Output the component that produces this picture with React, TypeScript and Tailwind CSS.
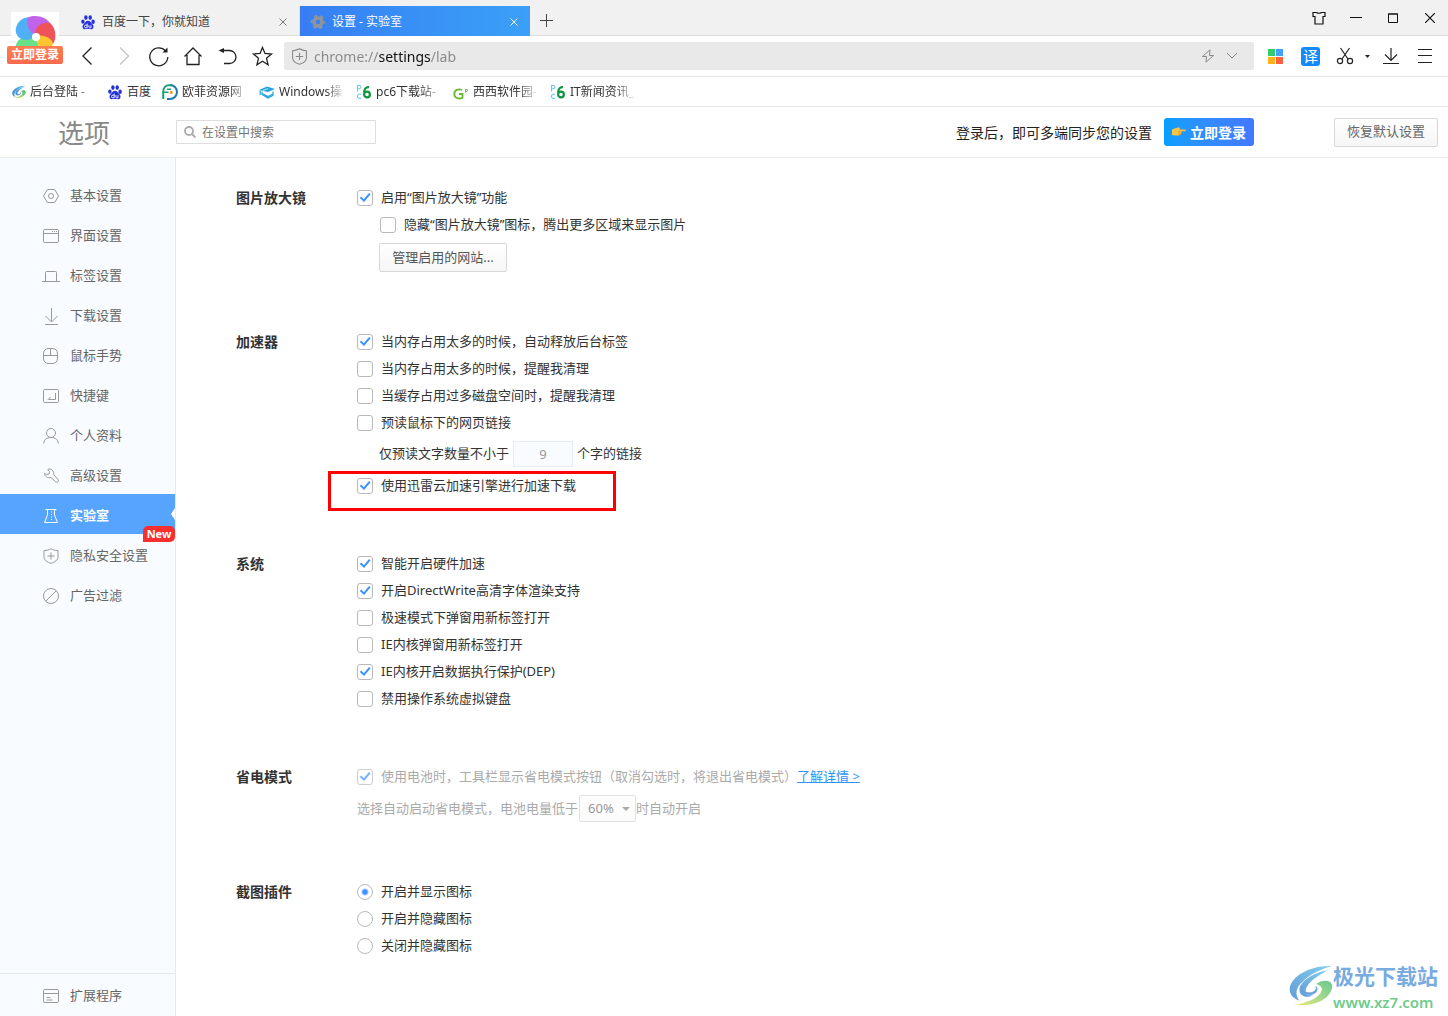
import React, { useState } from 'react';

type IconProps = { className?: string };

const line = {
  fill: 'none',
  stroke: 'currentColor',
  strokeWidth: 1,
} as const;

const BaiduIcon = ({ className = 'h-4 w-4' }: IconProps) => (
  <svg viewBox="0 0 16 16" className={className} fill="#2531d8">
    <ellipse cx="2.9" cy="7.6" rx="1.7" ry="2.2" />
    <ellipse cx="5.9" cy="3.6" rx="1.7" ry="2.4" />
    <ellipse cx="10.2" cy="3.6" rx="1.7" ry="2.4" />
    <ellipse cx="13.1" cy="7.8" rx="1.7" ry="2.2" />
    <path d="M8 6.8c2 0 2.8 1.8 4 3 1.400 1.300 1.700 2.300 1.400 3.600-.4 1.600-2 2-3.400 1.700-1.400-.3-2.600-.3-4 0-1.500.3-3-.2-3.400-1.700-.3-1.300.1-2.400 1.400-3.600 1.200-1.200 2-3 4-3z" />
    <path d="M7.200 9.600v4.200H5.800a1.300 1.300 0 0 1 0-2.600h1.400M8.900 11.200v1.800q0 .8.8.8h1.300v-2.600" fill="none" stroke="#fff" strokeWidth=".9" />
  </svg>
);

const GearIcon = () => (
  <svg viewBox="0 0 16 16" className="h-4 w-4" fill="none" stroke="#8f959c">
    <circle cx="8" cy="8" r="4" strokeWidth="3.400" />
    <circle cx="8" cy="8" r="6.300" strokeWidth="2" strokeDasharray="3.300 3.300" strokeDashoffset="1.600" />
  </svg>
);

const SwirlLogo = ({ className = 'h-4 w-4' }: IconProps) => (
  <svg viewBox="0 0 42 40" className={className}>
    <defs>
      <linearGradient id="swirlTop" x1="0" y1="1" x2="1" y2="0">
        <stop offset="0" stopColor="#3f83cf" />
        <stop offset="1" stopColor="#62c3ea" />
      </linearGradient>
      <linearGradient id="swirlBottom" x1="0" y1="1" x2="1" y2="0">
        <stop offset="0" stopColor="#e6e84e" />
        <stop offset=".5" stopColor="#8fd070" />
        <stop offset="1" stopColor="#45bb72" />
      </linearGradient>
    </defs>
    <path d="M41 1C20 0 2 11 .8 22c-.7 6 3 10 9.200 12-5-6-3-13 3-18C20 9 30 4 41 1z" fill="url(#swirlTop)" />
    <path d="M37 5C24 7 11 15 10 23c-.6 6 6 9 13 6-6 1-9-3-6-8 3-6 11-11 20-16z" fill="url(#swirlTop)" />
    <path d="M14 24c1 5 7 6 11 3 3-3 3-6 0-7 2 3-1 6-5 6-3 0-5-1-6-2z" fill="#4a8ed4" />
    <path d="M26 18c4-3 9-4 13-2 5 4 1 13-8 18-8 4-17 5-27 4 9-1 18-4 23-8 6-5 6-10-1-12z" fill="url(#swirlBottom)" />
  </svg>
);

const EdgeLeafIcon = () => (
  <svg viewBox="0 0 16 16" className="h-4 w-4" fill="none">
    <path d="M8 1a7 7 0 0 1 0 14H5" stroke="#1f78b4" strokeWidth="2" />
    <path d="M9 1.200H7C3.500 1.200 1.200 4 1.200 8v7" stroke="#1b9e77" strokeWidth="2" />
    <path d="M2 8.200h4.500M5 5.200h4" stroke="#1b9e77" strokeWidth="1.600" />
    <circle cx="9.200" cy="8.400" r="1.600" fill="#f39c33" />
  </svg>
);

const HatFavicon = () => (
  <svg viewBox="0 0 16 16" className="h-4 w-4">
    <path d="M0 6 8 2.500 16 5 9 8z" fill="#25a5e0" />
    <path d="M3 7.500v3L9 14l5-2.500v-4M3 9.500l6 3 5-2.500M1.200 6.500V11" fill="none" stroke="#25a5e0" strokeWidth="1.200" />
    <path d="M4 6.500 9 4.500" stroke="#fff" strokeWidth=".7" />
  </svg>
);

const Pc6Icon = () => (
  <svg viewBox="0 0 16 16" className="h-4 w-4" fill="none">
    <path d="M1.500 7.500v-6h1.800a1.600 1.600 0 0 1 0 3.200H1.500M5 10.500a2.200 2.200 0 1 0 0 3.500" stroke="#6cc8ea" strokeWidth="1.100" />
    <path d="M13 3.200c-3-.6-4.800 2-4.800 5.300" stroke="#0f9640" strokeWidth="2.200" />
    <circle cx="11" cy="10.500" r="2.900" stroke="#0f9640" strokeWidth="2.200" />
  </svg>
);

const XixiIcon = () => (
  <svg viewBox="0 0 16 16" className="h-4 w-4" fill="none" stroke="#6ab82f">
    <path d="M9 6C5.500 4.400 1.300 6 1.300 10s4.200 5.500 8.200 3.800V10H6" strokeWidth="1.800" />
    <path d="M12.500 8.500v-3h1.200a.8.8 0 0 1 0 1.800h-1.200" strokeWidth="1" />
  </svg>
);

const BrowserLogo = () => (
  <svg viewBox="0 0 48 36" className="h-9 w-12 bg-white">
    <path d="M25 24C13 24 5 26 4.500 36H28z" fill="#6be08a" />
    <path d="M25 24C10 34 3 22 5 16 7 8 14 4 20 6c-3 6-1 14 5 18z" fill="#4fb0f8" />
    <path d="M25 24c-9-5-9-13-9-18 7-4 20-2 24 7-7-2-15 1-15 11z" fill="#c163ea" />
    <path d="M25 24c-3-8 5-15 14-13 6 5 7 15 3 21-2-5-8-8-17-8z" fill="#f0525a" />
    <path d="M25 24c8-2 16 2 17 8l-2 4H28z" fill="#ffc52e" />
    <circle cx="25" cy="25" r="4" fill="#fff" />
  </svg>
);

const ShieldIcon = ({ className = 'h-4 w-4' }: IconProps) => (
  <svg viewBox="0 0 16 16" className={className} {...line}>
    <path d="M8 .7C6 2 4 2.500 1.500 2.500v6.800C1.500 12 4 14 8 15.400c4-1.400 6.500-3.400 6.500-6.100V2.500C12 2.500 10 2 8 .7zM8 4.500v7M4.500 8h7" />
  </svg>
);

const navIcons: Record<string, React.ReactNode> = {
  basic: <path d="M4.300 1.500h7.400L15.500 8l-3.800 6.500H4.300L.5 8zM8 5.500a2.500 2.500 0 1 0 0 5 2.500 2.500 0 0 0 0-5z" />,
  ui: <path d="M2 1.500h12q1.500 0 1.500 1v11q0 1-1.500 1H2q-1.500 0-1.500-1v-11q0-1 1.500-1zM.5 5.500h15M9 3.500h1M11 3.500h1M13 3.500h1" />,
  tab: <path d="M-1 13.500h18M2.500 13.500v-9q0-1 1-1h9q1 0 1 1v9" />,
  download: <path d="M8.500 0v13.500M2.500 8l6 6 6-6M2 16.500h13" />,
  mouse: <path d="M6 .5h3q5.500 0 5.500 5.500v4q0 5.500-5.500 5.500H6Q.5 15.500.5 10V6Q.5.500 6 .5zM.5 7.500h14M7.500.5v7" />,
  shortcut: <path d="M1.500 1.500h13q1 0 1 1v11q0 1-1 1h-13q-1 0-1-1v-11q0-1 1-1zM12.500 5v6.500h-7M5 11.500 7.500 9" />,
  profile: <path d="M8 .5a4.500 4.500 0 1 0 0 9 4.500 4.500 0 0 0 0-9zM.7 15.500c.3-4 3-6 7.300-6s7 2 7.300 6" />,
  advanced: <path d="M6 .8a5 5 0 0 1 4.700 6l4.300 4.500a1.700 1.700 0 0 1-2.500 2.400L8 9.500c-3.300 1-6.300-1-6.500-4.200l1.800 1.300 2.800-.6.400-2.500L4.700 1.800z" />,
  lab: <path d="M2.500 1.500h11M4.500 1.500v5.500L1.500 14.500h13L11.500 7V1.500M8 4h1M8 6.500h1M8 9h1M8 11.500h1" />,
  privacy: <path d="M8 .7C6 2 4 2.500 1 2.500v6.800C1 12 4 14 8 15.400c4-1.400 7-3.400 7-6.100V2.500C12 2.500 10 2 8 .7zM8 4.500v7M4.500 8h7" />,
  adblock: <path d="M8 .5a7.500 7.500 0 1 0 0 15 7.500 7.500 0 0 0 0-15zM2.800 13.200 13.200 2.800" />,
  extension: <path d="M2 1.500h12q1.500 0 1.500 1v11q0 1-1.500 1H2q-1.500 0-1.500-1v-11q0-1 1.500-1zM.5 5.500h15M3.500 9.500h4M3.500 12h6" />,
};

const NavIcon = ({ name }: { name: string }) => (
  <svg viewBox="0 0 16 16" className="h-4 w-4 overflow-visible" {...line}>{navIcons[name]}</svg>
);

const navItems = [
  { id: 'basic', label: '基本设置' },
  { id: 'ui', label: '界面设置' },
  { id: 'tab', label: '标签设置' },
  { id: 'download', label: '下载设置' },
  { id: 'mouse', label: '鼠标手势' },
  { id: 'shortcut', label: '快捷键' },
  { id: 'profile', label: '个人资料' },
  { id: 'advanced', label: '高级设置' },
  { id: 'lab', label: '实验室' },
  { id: 'privacy', label: '隐私安全设置' },
  { id: 'adblock', label: '广告过滤' },
];

const bookmarks = [
  { label: '后台登陆 -', icon: <SwirlLogo className="h-4 w-4 pl-[2px]" /> },
  { label: '百度', icon: <BaiduIcon />, short: true },
  { label: '欧菲资源网', icon: <EdgeLeafIcon /> },
  { label: 'Windows操', icon: <HatFavicon /> },
  { label: 'pc6下载站-', icon: <Pc6Icon /> },
  { label: '西西软件园-', icon: <XixiIcon /> },
  { label: 'IT新闻资讯_', icon: <Pc6Icon /> },
];

interface CheckProps {
  label: string;
  on?: boolean;
  disabled?: boolean;
}

function Check({ label, on = false, disabled = false }: CheckProps) {
  const [checked, setChecked] = useState(on);
  return (
    <label className={`flex h-[27px] items-center gap-2 ${disabled ? 'text-[#aaa]' : 'text-[#333]'}`}>
      <span className={`grid h-4 w-4 shrink-0 ${disabled ? 'opacity-70' : ''}`}>
        <input
          type="checkbox"
          checked={checked}
          disabled={disabled}
          onChange={(e) => setChecked(e.target.checked)}
          className="h-4 w-4 appearance-none rounded-[3px] border border-[#b9b9b9] bg-white [grid-area:1/1]"
        />
        {checked && (
          <svg viewBox="0 0 16 16" className="pointer-events-none h-4 w-4 [grid-area:1/1]" fill="none" stroke="#3b92fb" strokeWidth="2">
            <path d="M3.500 7.200 7 10.600l5.800-7" />
          </svg>
        )}
      </span>
      {label}
    </label>
  );
}

function Section({ title, children }: { title: string; children: React.ReactNode }) {
  return (
    <section className="flex">
      <h2 className="w-[121px] shrink-0 text-[14px] leading-[27px] font-bold text-[#333]">{title}</h2>
      <div className="min-w-0 flex-1">{children}</div>
    </section>
  );
}

function ToolButton({ label, children }: { label: string; children: React.ReactNode }) {
  return (
    <button type="button" aria-label={label} className="flex h-8 w-[35px] items-center justify-center">
      <svg viewBox="0 0 20 20" className="h-5 w-5 overflow-visible" fill="none" stroke="currentColor" strokeWidth="1.300">
        {children}
      </svg>
    </button>
  );
}

function TabBar() {
  return (
    <div className="flex h-9 items-end border-b border-[#dcdcdc] bg-[#f1f1f1] pl-[70px] text-[12px]">
      <div className="flex h-[29px] w-[230px] items-center border-r border-[#e2e2e2] pt-[2px] pr-2 pl-[10px] text-[#444]">
        <BaiduIcon />
        <span className="ml-[6px] flex-1">百度一下，你就知道</span>
        <button type="button" aria-label="关闭标签" className="p-1 text-[#777]">
          <svg viewBox="0 0 8 8" className="h-2 w-2" {...line}><path d="M.5.5l7 7M7.500.5l-7 7" /></svg>
        </button>
      </div>
      <div className="-mb-px flex h-[30px] w-[230px] items-center bg-linear-to-r from-[#377df3] via-[#3890f5] to-[#3ba0f8] pt-px pr-2 pl-[10px] text-white">
        <GearIcon />
        <span className="ml-[6px] flex-1">设置 - 实验室</span>
        <button type="button" aria-label="关闭标签" className="p-1 text-white">
          <svg viewBox="0 0 8 8" className="h-2 w-2" {...line}><path d="M.5.5l7 7M7.500.5l-7 7" /></svg>
        </button>
      </div>
      <button type="button" aria-label="新建标签" className="flex h-[30px] w-8 items-center justify-center text-[#444]">
        <svg viewBox="0 0 13 13" className="h-[13px] w-[13px]" {...line}><path d="M6.500 0v13M0 6.500h13" /></svg>
      </button>
      <div className="ml-auto flex h-9 w-[148px] items-center pt-[2px] text-[#111]">
        <button type="button" aria-label="皮肤" className="flex flex-1 justify-center">
          <svg viewBox="0 0 14 14" className="h-[14px] w-[14px]" {...line} strokeWidth="1.200">
            <path d="M1 1.500h3.500q2.500 1.500 5 0H13v4h-2v7.500H3V5.500H1z" />
          </svg>
        </button>
        <button type="button" aria-label="最小化" className="flex flex-1 justify-center">
          <svg viewBox="0 0 12 12" className="h-3 w-3" {...line}><path d="M0 5.500h12" /></svg>
        </button>
        <button type="button" aria-label="最大化" className="flex flex-1 justify-center">
          <svg viewBox="0 0 10 10" className="h-[10px] w-[10px]" {...line}><path d="M.5 1h9v8.500h-9zM0 1h10" /></svg>
        </button>
        <button type="button" aria-label="关闭" className="flex flex-1 justify-center">
          <svg viewBox="0 0 10 10" className="h-[10px] w-[10px]" {...line} strokeWidth="1.200"><path d="M0 0l10 10M10 0L0 10" /></svg>
        </button>
      </div>
    </div>
  );
}

function Toolbar() {
  const [url, setUrl] = useState('chrome://settings/lab');
  return (
    <div className="flex h-[41px] items-center border-b border-[#e6e6e6] bg-white pl-[70px] text-[#222]">
      <ToolButton label="后退"><path d="M13.500 1.500 5 10l8.500 8.500" /></ToolButton>
      <span className="text-[#c4c4c4]">
        <ToolButton label="前进"><path d="M7 1.500 15.500 10 7 18.500" /></ToolButton>
      </span>
      <ToolButton label="刷新">
        <path d="M17.500 4.800A9 9 0 1 0 19.800 11" />
        <path d="M19.500 1.500v5h-5z" fill="currentColor" stroke="none" />
      </ToolButton>
      <ToolButton label="主页"><path d="M1.500 10.500 10 2l8.500 8.500M4 9v9.500h12V9" /></ToolButton>
      <ToolButton label="恢复">
        <path d="M3 4.500h8.500a6.500 6.500 0 0 1 0 13H6" />
        <path d="M.5 4.500 6 2v5z" fill="currentColor" stroke="none" />
      </ToolButton>
      <ToolButton label="收藏"><path d="M9.500 1.500 12 7.500 18.500 8 13.500 12.300 15.100 18.800 9.500 15.300 3.900 18.800 5.500 12.300 .5 8 7 7.500z" /></ToolButton>
      <div className="ml-1 flex h-7 flex-1 items-center rounded-[2px] bg-[#e9e9e9] pr-[10px] pl-[7px] text-[#888]">
        <ShieldIcon className="h-[17px] w-[17px]" />
        <input
          aria-label="地址栏"
          value={url}
          spellCheck={false}
          onChange={(e) => setUrl(e.target.value)}
          className="ml-[6px] h-7 min-w-0 flex-1 bg-[linear-gradient(to_right,#888_65px,#111_65px,#111_117px,#888_117px)] bg-clip-text text-[14px] text-transparent caret-black outline-none"
        />
        <button type="button" aria-label="极速模式" className="flex w-6 justify-center">
          <svg viewBox="0 0 14 14" className="h-[14px] w-[14px]" {...line}>
            <path d="M9 .8 1.500 7.500h4L5 13.200 12.500 6.500h-4z" />
          </svg>
        </button>
        <button type="button" aria-label="展开" className="flex w-6 justify-center">
          <svg viewBox="0 0 12 8" className="h-2 w-3" {...line}><path d="M1 1l5 5 5-5" /></svg>
        </button>
      </div>
      <div className="flex items-center pr-4">
        <button type="button" aria-label="应用" className="flex w-[43px] justify-center">
          <svg viewBox="0 0 15 15" className="h-[15px] w-[15px]">
            <path d="M0 0h7v7H0z" fill="#2ecc6b" />
            <path d="M8 0h7v7H8z" fill="#3fa2fb" />
            <path d="M0 8h7v7H0z" fill="#ffb11b" />
            <path d="M8 8h7v7H8z" fill="#ff6240" />
          </svg>
        </button>
        <button type="button" className="ml-1 h-[19px] w-[19px] rounded-[3px] bg-[#1588fb] text-center text-[15px] leading-[19px] text-white">译</button>
        <button type="button" aria-label="截图" className="ml-4 flex w-[34px] items-center justify-between">
          <svg viewBox="0 0 18 18" className="h-[18px] w-[18px]" {...line} strokeWidth="1.200">
            <path d="M4.500 1l7.500 11M13.500 1 6 12" />
            <circle cx="4" cy="14" r="2.600" />
            <circle cx="14" cy="14" r="2.600" />
          </svg>
          <svg viewBox="0 0 5 3" className="h-[3px] w-[5px]" fill="currentColor"><path d="M0 0h5L2.500 3z" /></svg>
        </button>
        <button type="button" aria-label="下载" className="ml-3">
          <svg viewBox="0 0 18 18" className="h-[18px] w-[18px]" {...line} strokeWidth="1.200">
            <path d="M9 1v12M3 7.500l6 6 6-6M1 16.500h16" />
          </svg>
        </button>
        <button type="button" aria-label="菜单" className="ml-[18px]">
          <svg viewBox="0 0 14 14" className="h-[14px] w-[14px]" {...line}>
            <path d="M0 .5h14M0 6.500h14M0 13.500h14" />
          </svg>
        </button>
      </div>
    </div>
  );
}

export default function App() {
  const [active, setActive] = useState('lab');
  const [minChars, setMinChars] = useState('9');
  const [plugin, setPlugin] = useState('开启并显示图标');

  return (
    <div className="relative flex min-h-screen flex-col bg-white font-['Noto_Sans','Noto_Sans_CJK_SC',sans-serif] text-[13px] text-[#333]">
      <TabBar />
      <Toolbar />

      {/* account avatar hangs over the tab bar and the toolbar */}
      <a href="#login" className="absolute top-3 left-[7px] flex w-14 flex-col items-center">
        <BrowserLogo />
        <span className="-mt-[2px] w-14 rounded-[2px] bg-linear-to-b from-[#ff7f50] to-[#f8694e] text-center text-[12px] leading-[18px] font-bold text-white">立即登录</span>
      </a>

      <nav className="flex h-[30px] items-center gap-[11px] border-b border-[#e6e6e6] pl-[10px] text-[12px]">
        {bookmarks.map((b) => (
          <a key={b.label} href="#bookmark" className="flex items-center gap-1">
            {b.icon}
            <span className={b.short ? '' : 'w-[66px] overflow-hidden whitespace-nowrap [mask-image:linear-gradient(to_right,black_70%,transparent)]'}>{b.label}</span>
          </a>
        ))}
      </nav>

      <header className="flex h-[51px] items-center border-b border-[#ededed] pr-[10px]">
        <h1 className="w-44 pt-[2px] pl-[58px] text-[26px] leading-8 text-[#888]">选项</h1>
        <label className="flex h-6 w-[200px] items-center gap-[6px] border border-[#dedede] pl-[7px]">
          <svg viewBox="0 0 12 12" className="h-3 w-3 shrink-0" fill="none" stroke="#aaa" strokeWidth="1.800">
            <circle cx="5" cy="5" r="4" />
            <path d="M8 8l3.500 3.500" />
          </svg>
          <input aria-label="在设置中搜索" placeholder="在设置中搜索" className="min-w-0 flex-1 pt-px text-[12px] outline-none placeholder:text-[#757575]" />
        </label>
        <span className="ml-auto text-[14px] text-[#222]">登录后，即可多端同步您的设置</span>
        <button type="button" className="ml-3 flex h-7 w-[90px] items-center justify-center gap-1 rounded-[3px] bg-linear-to-r from-[#039fff] to-[#4278ff] text-[14px] font-bold text-white">
          <svg viewBox="0 0 14 10" className="h-[10px] w-[14px]">
            <path d="M0 2.500 4 1l3-.8 1 1.300-1 1h6.200q1 .8 0 1.700H9.500l.3 1.200-.8 1.200-.5 1.200-1.500.8H3L0 8z" fill="#fdc441" />
            <path d="M6 4.500h3.500M6 6h3M6 7.500h2.500" stroke="#d98a1e" strokeWidth=".6" />
          </svg>
          立即登录
        </button>
        <button type="button" className="ml-20 h-[29px] w-[104px] rounded-[2px] border border-[#d8d8d8] bg-linear-to-b from-white to-[#f6f6f6] text-[#666]">恢复默认设置</button>
      </header>

      <div className="flex flex-1">
        <aside className="flex w-44 shrink-0 flex-col border-r border-[#e4eaf1] bg-[#f8fbff] pt-4">
          {navItems.map((item) => (
            <a
              key={item.id}
              href={`#${item.id}`}
              onClick={() => setActive(item.id)}
              className={`relative flex h-10 items-center gap-[11px] pt-[3px] pl-[43px] ${active === item.id ? 'bg-[#57a4ff] font-bold text-white' : 'text-[#666]'}`}
            >
              <span className={active === item.id ? 'text-white' : 'text-[#999]'}><NavIcon name={item.id} /></span>
              {item.label}
              {active === item.id && (
                <svg viewBox="0 0 4 12" className="absolute top-[14px] right-0 h-3 w-1" fill="#fff"><path d="M4 0v12L0 6z" /></svg>
              )}
              {item.id === 'lab' && (
                <span className="absolute right-0 -bottom-2 z-10 h-4 w-8 rounded-[5px] rounded-bl-none bg-[#f5302f] text-center text-[11px] leading-4 font-bold text-white">New</span>
              )}
            </a>
          ))}
          <a href="#extension" className="mt-auto flex h-[43px] items-center gap-[11px] border-t border-[#e4eaf1] pt-px pl-[43px] text-[#666]">
            <span className="text-[#999]"><NavIcon name="extension" /></span>
            扩展程序
          </a>
        </aside>

        <main className="flex flex-1 flex-col gap-[51px] pt-[26px] pb-10 pl-[60px]">
          <Section title="图片放大镜">
            <Check label="启用“图片放大镜”功能" on />
            <div className="pl-[23px]">
              <Check label="隐藏“图片放大镜”图标，腾出更多区域来显示图片" />
            </div>
            <div className="flex h-[39px] items-center pl-[22px]">
              <button type="button" className="h-[29px] w-32 rounded-[2px] border border-[#d8d8d8] bg-linear-to-b from-white to-[#f6f6f6] text-[#555]">管理启用的网站...</button>
            </div>
          </Section>

          <Section title="加速器">
            <Check label="当内存占用太多的时候，自动释放后台标签" on />
            <Check label="当内存占用太多的时候，提醒我清理" />
            <Check label="当缓存占用过多磁盘空间时，提醒我清理" />
            <Check label="预读鼠标下的网页链接" />
            <label className="flex h-9 items-center gap-1 pl-[22px]">
              仅预读文字数量不小于
              <input
                value={minChars}
                onChange={(e) => setMinChars(e.target.value)}
                className="h-[26px] w-[60px] border border-[#e4ebf5] bg-[#f8fbff] text-center text-[#999] outline-none"
              />
              个字的链接
            </label>
            <div className="relative">
              <Check label="使用迅雷云加速引擎进行加速下载" on />
              <div className="pointer-events-none absolute -top-px -left-[29px] h-10 w-72 border-3 border-[#f00]" />
            </div>
          </Section>

          <Section title="系统">
            <Check label="智能开启硬件加速" on />
            <Check label="开启DirectWrite高清字体渲染支持" on />
            <Check label="极速模式下弹窗用新标签打开" />
            <Check label="IE内核弹窗用新标签打开" />
            <Check label="IE内核开启数据执行保护(DEP)" on />
            <Check label="禁用操作系统虚拟键盘" />
          </Section>

          <Section title="省电模式">
            <div className="flex items-center">
              <Check label="使用电池时，工具栏显示省电模式按钮（取消勾选时，将退出省电模式）" on disabled />
              <a href="#battery" className="text-[#2e96fa] underline">了解详情 &gt;</a>
            </div>
            <label className="flex h-[37px] items-center text-[#aaa]">
              选择自动启动省电模式，电池电量低于
              <span className="relative ml-px">
                <select disabled defaultValue="60%" className="block h-[27px] w-[57px] appearance-none rounded-[2px] border border-[#e2e2e2] bg-[#fcfcfc] pl-2 text-[#999]">
                  <option>60%</option>
                  <option>40%</option>
                  <option>20%</option>
                </select>
                <svg viewBox="0 0 8 4" className="pointer-events-none absolute top-3 right-[6px] h-1 w-2" fill="#aaa"><path d="M0 0h8L4 4z" /></svg>
              </span>
              时自动开启
            </label>
          </Section>

          <Section title="截图插件">
            {['开启并显示图标', '开启并隐藏图标', '关闭并隐藏图标'].map((name) => (
              <label key={name} className="flex h-[27px] items-center gap-2">
                <input
                  type="radio"
                  name="plugin"
                  checked={plugin === name}
                  onChange={() => setPlugin(name)}
                  className="h-4 w-4 appearance-none rounded-full border border-[#b9b9b9] bg-white checked:bg-[radial-gradient(circle,#3b92fb_2px,#fff_4px)]"
                />
                {name}
              </label>
            ))}
          </Section>
        </main>
      </div>

      <div className="absolute right-[10px] bottom-1 flex items-center">
        <SwirlLogo className="h-[42px] w-[44px] opacity-80" />
        <div className="flex flex-col">
          <span className="text-[21px] leading-8 font-bold text-[#78abe0]">极光下载站</span>
          <span className="text-[15px] leading-5 font-semibold text-[#6fcb8c]">www.xz7.com</span>
        </div>
      </div>
    </div>
  );
}
